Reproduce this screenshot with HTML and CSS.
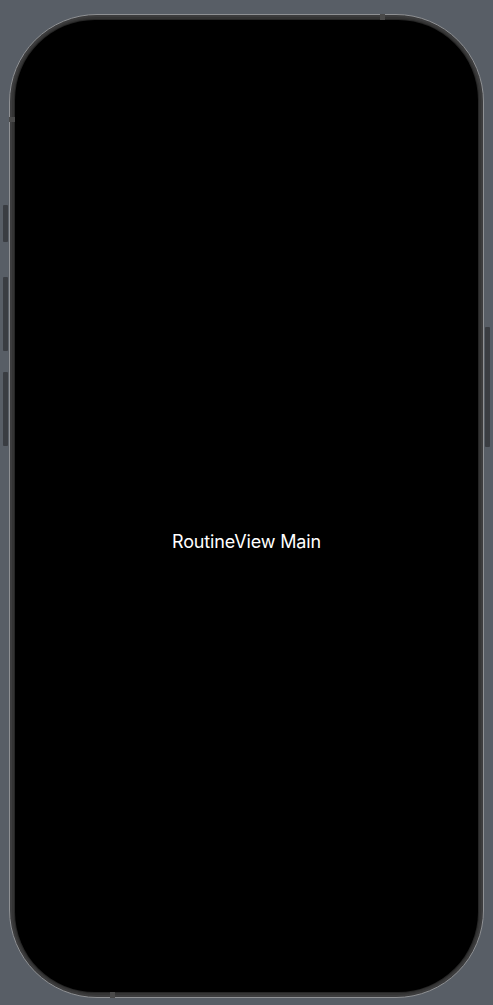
FILE: index.html
```html
<!DOCTYPE html>
<html>
<head>
<meta charset="utf-8">
<link rel="stylesheet" href="styles.css">
</head>
<body>
  <div class="device">
    <span class="btn btn-action"></span>
    <span class="btn btn-vol-up"></span>
    <span class="btn btn-vol-down"></span>
    <span class="btn btn-power"></span>
    <span class="band band-top"></span>
    <span class="band band-left"></span>
    <span class="band band-bottom"></span>
    <div class="screen">
      <p class="title">RoutineView Main</p>
    </div>
  </div>
</body>
</html>
```

FILE: styles.css
```css
html, body {
  margin: 0;
  padding: 0;
  background: #585e66;
}
body {
  width: 493px;
  height: 1005px;
  padding: 14px 9px 7px 9px;
  box-sizing: border-box;
}
.device {
  position: relative;
  width: 475px;
  height: 984px;
  box-sizing: border-box;
  border: 1px solid #8f9194;
  border-radius: 88px;
  background: #343434;
  padding: 5px;
  box-shadow: inset 0 0 0 2px #3c3c3d;
}
.screen {
  width: 100%;
  height: 100%;
  box-sizing: border-box;
  background: #000;
  border-radius: 80px;
  box-shadow: 0 0 0 1px #262626;
  display: flex;
  align-items: center;
  justify-content: center;
  padding-top: 70px;
}
.title {
  margin: 0;
  color: #ffffff;
  font-family: Inter, "Liberation Sans", sans-serif;
  font-size: 18px;
  letter-spacing: -0.15px;
}
.btn {
  position: absolute;
  width: 5px;
  background: #3a3d42;
  border-radius: 1px;
}
.btn-action { left: -7px; top: 190px; height: 37px; }
.btn-vol-up { left: -7px; top: 262px; height: 74px; }
.btn-vol-down { left: -7px; top: 357px; height: 74px; }
.btn-power { right: -7px; top: 312px; height: 120px; }
.band {
  position: absolute;
  background: #4a4a4a;
}
.band-top { top: -1px; left: 370px; width: 5px; height: 6px; }
.band-left { left: -1px; top: 102px; width: 6px; height: 5px; }
.band-bottom { bottom: -1px; left: 100px; width: 5px; height: 6px; }
```
